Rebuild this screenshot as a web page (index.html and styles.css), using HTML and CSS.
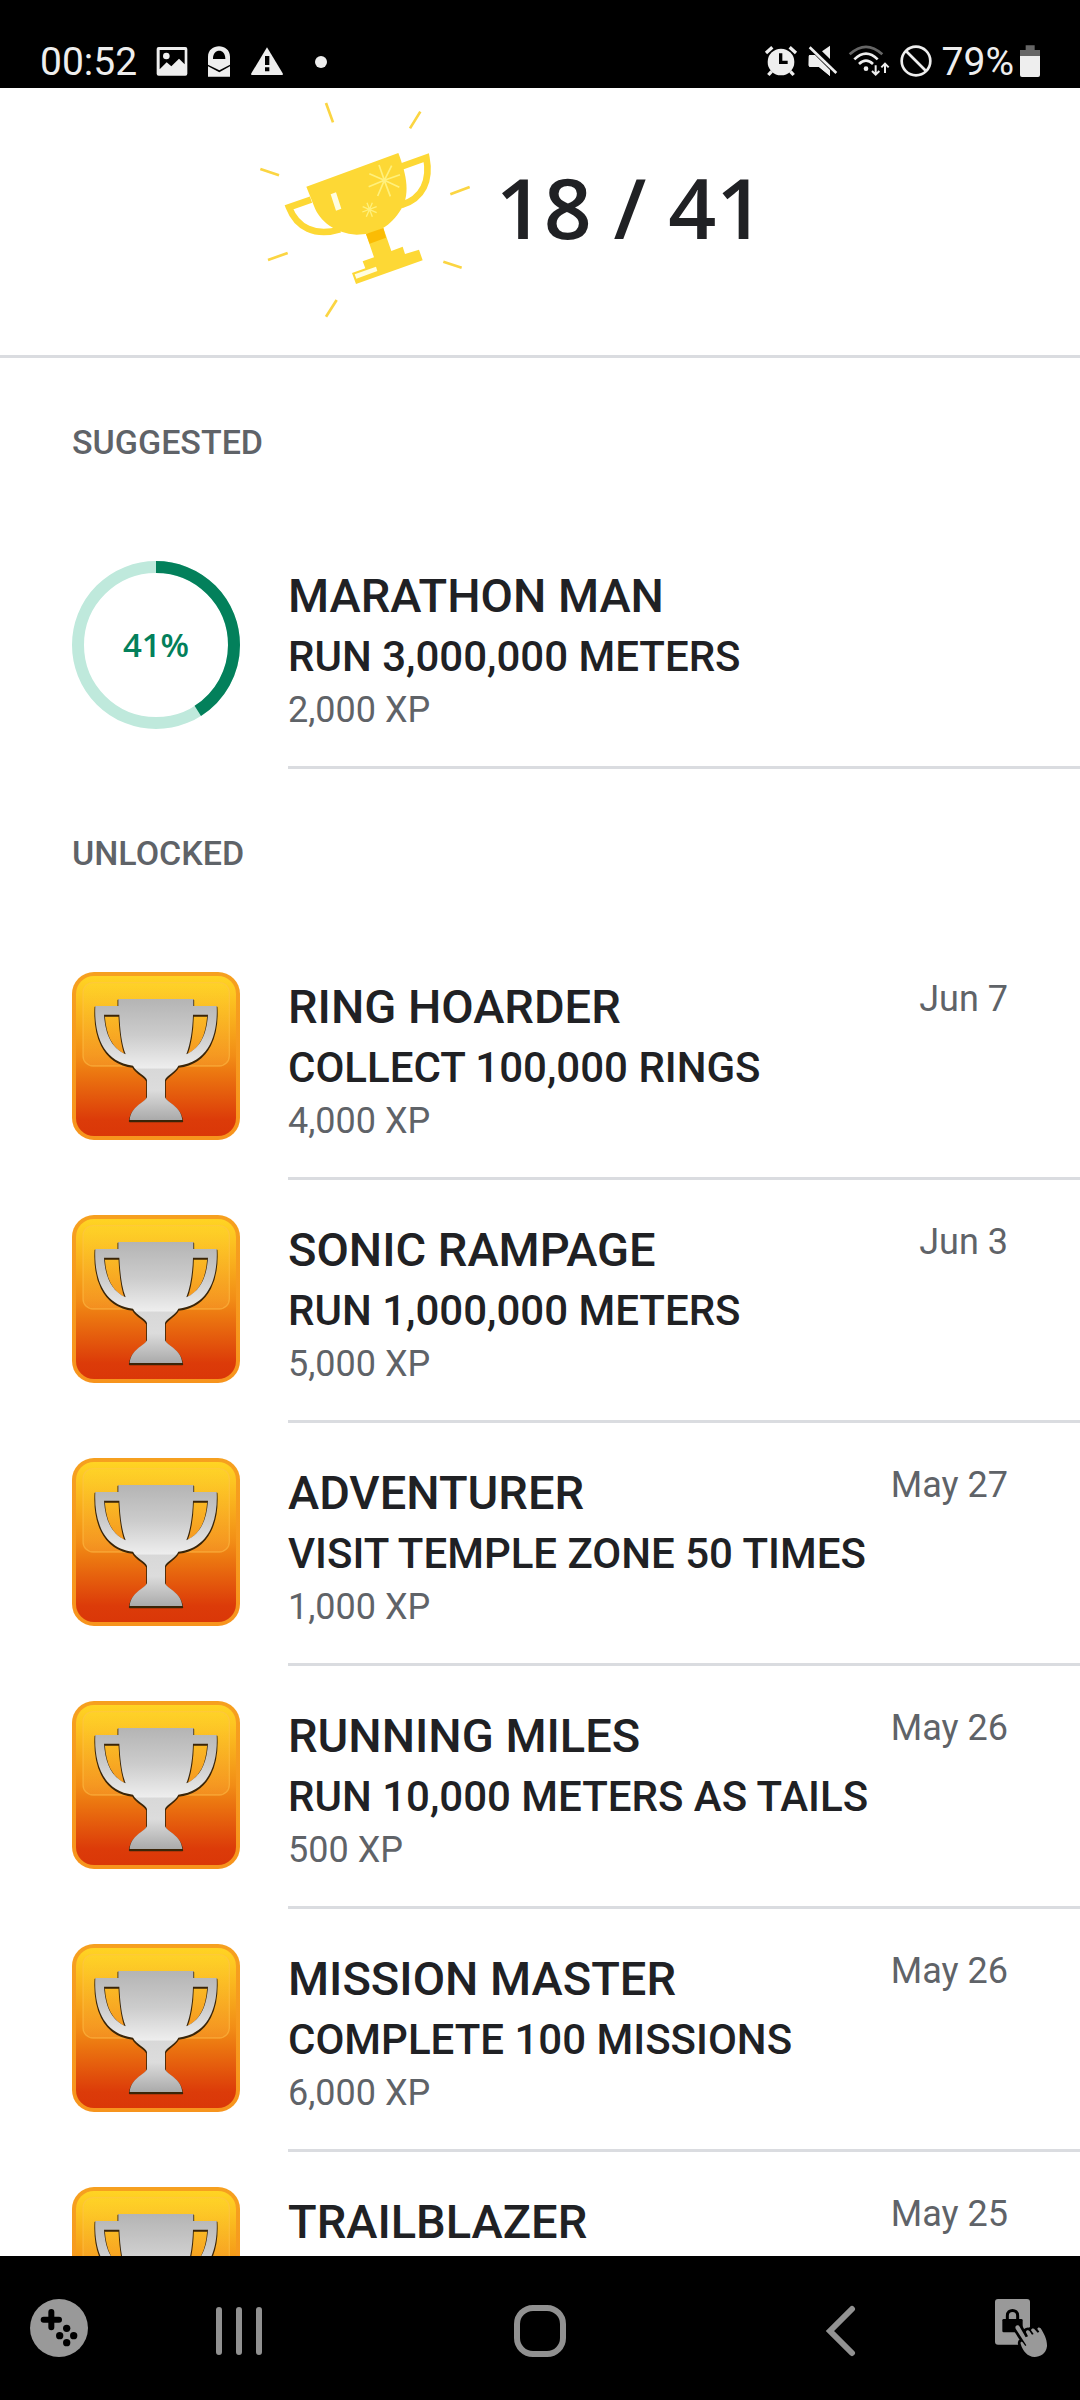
FILE: index.html
```html
<!DOCTYPE html>
<html lang="en">
<head>
<meta charset="utf-8">
<meta name="viewport" content="width=device-width, initial-scale=1">
<title>Achievements</title>
<link rel="stylesheet" href="styles.css">
</head>
<body>
<svg width="0" height="0" class="defs" aria-hidden="true">
  <defs>
    <linearGradient id="tile" x1="0" y1="0" x2="0" y2="1">
      <stop offset="0" stop-color="#ffd423"/><stop offset=".12" stop-color="#fdc521"/><stop offset=".5" stop-color="#f28d16"/><stop offset=".62" stop-color="#eb7410"/><stop offset=".9" stop-color="#dc3b09"/><stop offset="1" stop-color="#da3708"/>
    </linearGradient>
    <linearGradient id="gloss" x1="0" y1="0" x2="0" y2="1">
      <stop offset="0" stop-color="#ffe03a" stop-opacity=".2"/><stop offset="1" stop-color="#ffb545" stop-opacity=".25"/>
    </linearGradient>
    <linearGradient id="edge" x1="0" y1="0" x2="0" y2="1">
      <stop offset="0" stop-color="#f6a01f"/><stop offset="1" stop-color="#f7941d"/>
    </linearGradient>
    <linearGradient id="silver" x1="0" y1="116" x2="0" y2="482" gradientUnits="userSpaceOnUse">
      <stop offset="0" stop-color="#b4b4b4"/><stop offset=".3" stop-color="#cccccc"/><stop offset=".57" stop-color="#eeeeee"/><stop offset=".575" stop-color="#d8d8d8"/><stop offset=".75" stop-color="#dcdcdc"/><stop offset="1" stop-color="#a9a9a9"/>
    </linearGradient>
    <symbol id="badge" viewBox="36 36 504 504">
      <rect x="36" y="36" width="504" height="504" rx="66" fill="url(#edge)"/>
      <rect x="48" y="48" width="480" height="480" rx="54" fill="url(#tile)"/>
      <rect x="69" y="68" width="439" height="250" rx="30" fill="url(#gloss)" stroke="#ffc44d" stroke-opacity=".5" stroke-width="4"/>
      <g stroke-linejoin="round">
        <path fill-rule="evenodd" transform="translate(0 4)" fill="#3a2508" stroke="#3a2508" stroke-width="5" d="M175 117H400V138H470C474 215 452 306 355 317C345 338 320 345 315 360V412C325 432 362 437 367 480H209C214 437 250 432 261 412V360C256 345 230 338 219 317C124 306 102 215 106 138H175ZM132 164C136 220 152 262 197 283C184 250 180 205 178 164ZM444 164C440 220 424 262 379 283C392 250 398 205 399 164Z"/>
        <path fill-rule="evenodd" fill="url(#silver)" d="M175 117H400V138H470C474 215 452 306 355 317C345 338 320 345 315 360V412C325 432 362 437 367 480H209C214 437 250 432 261 412V360C256 345 230 338 219 317C124 306 102 215 106 138H175ZM132 164C136 220 152 262 197 283C184 250 180 205 178 164ZM444 164C440 220 424 262 379 283C392 250 398 205 399 164Z"/>
      </g>
    </symbol>
  </defs>
</svg>

<div class="screen">
  <header class="status">
    <div class="status-group status-left">
      <span class="status-text">00:52</span>
      <svg width="32" height="36" viewBox="466 72 96 108" aria-hidden="true"><path fill-rule="evenodd" fill="#eee" d="M474 81H554Q560 81 560 87V161Q560 167 554 167H474Q468 167 468 161V87Q468 81 474 81ZM477 90V148L498 127L512 139L535 116L552 133V90Z"/><circle cx="497" cy="108" r="10" fill="#eee"/></svg>
      <svg width="24" height="36" viewBox="624 72 72 108" aria-hidden="true"><path fill-rule="evenodd" fill="#eee" d="M627 134V110C627 68 693 68 693 110V134L661 151ZM642 117H679C680 84 641 84 642 117Z"/><path fill="#eee" d="M627 139L661 157L693 139V170H627Z"/></svg>
      <svg width="34" height="36" viewBox="756 72 102 108" aria-hidden="true"><path fill="#eee" d="M807 82L854 160Q856 165 851 165H763Q758 165 760 160Z"/><path fill="#000" d="M801 108H814V135H801ZM801 142H814V154H801Z"/></svg>
      <svg width="36" height="12" viewBox="0 0 36 12" aria-hidden="true"><circle cx="18" cy="6" r="6" fill="#eee"/></svg>
    </div>
    <div class="status-group status-right">
      <svg width="34" height="36" viewBox="63 72 102 108" aria-hidden="true"><circle cx="114" cy="126" r="40" fill="#eee"/><path d="M69 99L88 82M140 82L159 99M86 154L76 165M142 154L152 165" stroke="#eee" stroke-width="10"/><path d="M113 100V127H134" fill="none" stroke="#000" stroke-width="10"/></svg>
      <svg width="30" height="36" viewBox="207 72 90 108" aria-hidden="true"><path fill="#eee" d="M210 109Q209 105 214 105H227L273 150V168L240 141H214Q209 141 209 136ZM249 94L273 77V117Z"/><path d="M214 82L292 159" stroke="#000" stroke-width="20"/><path fill="#eee" d="M209 109Q209 105 214 105H228L273 150V168L240 141H214Q209 141 209 136Z"/><path d="M212 82L292 159" stroke="#eee" stroke-width="8"/></svg>
      <svg width="42" height="36" viewBox="330 72 126 108" fill="none" aria-hidden="true"><path d="M335 103Q384 58 433 103" stroke="#666" stroke-width="8"/><path d="M349 118Q384 84 419 118M363 132Q384 112 405 132" stroke="#eee" stroke-width="8"/><circle cx="384" cy="146" r="7" fill="#eee"/><path d="M413 136V164M402 153L413 164L424 153M441 159V131M430 142L441 131L452 142" stroke="#eee" stroke-width="6"/></svg>
      <svg width="32" height="36" viewBox="473 72 96 108" fill="none" stroke="#eee" stroke-width="8" aria-hidden="true"><circle cx="521" cy="123" r="43"/><path d="M491 93L551 153"/></svg>
      <div class="battery">
        <span class="status-text">79%</span>
        <svg width="20" height="36" viewBox="840 72 60 108" aria-hidden="true"><path fill="#666" d="M857 76H884V90H900V108H840V90H857Z"/><path fill="#eee" d="M840 108H900V165Q900 171 894 171H846Q840 171 840 165Z"/></svg>
      </div>
    </div>
  </header>

  <main class="content">
    <section class="summary">
      <svg width="250" height="240" viewBox="0 0 750 720" aria-hidden="true">
        <path d="M258 39L279 97M541 65L510 115M61 237L117 256M689 291L631 313M84 510L143 489M610 515L665 533M290 630L258 680" stroke="#fbd542" stroke-width="8"/>
        <path d="M213 329L147 352C170 412 225 441 300 418M486 229L559 203C572 270 550 325 484 345" fill="none" stroke="#fdd835" stroke-width="20"/>
        <path fill="#fdd835" d="M199 290L475 189C500 255 514 318 478 366C445 416 400 434 350 434C285 430 238 393 222 348Z"/>
        <path fill="#fdd835" d="M378 432L430 414L454 483L488 470L495 492L537 479L548 511L348 582L336 549L376 535L368 514L402 502Z"/>
        <path fill="#fbbc04" d="M378 432L430 414L438 443L389 461Z"/>
        <path fill="#fffde0" d="M272 313L288 307L304 356L288 362ZM344 553L408 530L412 543L349 566Z"/>
        <path d="M433 271L417 225M433 271L455 227M433 271L480 254M433 271L478 292M433 271L451 319M433 271L413 318M433 271L386 290M433 271L388 251" stroke="#fff07c" stroke-width="5"/>
        <path d="M381 338L397 380M397 338L379 380M367 366L410 350M368 350L410 368" stroke="#fff07c" stroke-width="4"/>
      </svg>
      <h1 class="count">18 / 41</h1>
    </section>

    <h2 class="section-title">SUGGESTED</h2>
    <ul class="list">
      <li class="row">
        <div class="progress">
          <svg width="168" height="168" viewBox="0 0 168 168" fill="none" stroke-width="12" aria-hidden="true"><circle cx="84" cy="84" r="78" stroke="#bfe9dc"/><circle cx="84" cy="84" r="78" stroke="#03805b" pathLength="100" stroke-dasharray="41 59" transform="rotate(-90 84 84)"/></svg>
          <span class="progress-label">41%</span>
        </div>
        <div class="body"><div class="text"><h3 class="name">MARATHON MAN</h3><p class="goal">RUN 3,000,000 METERS</p><p class="xp">2,000 XP</p></div></div>
      </li>
    </ul>

    <h2 class="section-title">UNLOCKED</h2>
    <ul class="list">
      <li class="row"><svg class="badge" aria-hidden="true"><use href="#badge"/></svg><div class="body"><div class="text"><h3 class="name">RING HOARDER</h3><p class="goal">COLLECT 100,000 RINGS</p><p class="xp">4,000 XP</p></div><time class="date">Jun 7</time></div></li>
      <li class="row"><svg class="badge" aria-hidden="true"><use href="#badge"/></svg><div class="body"><div class="text"><h3 class="name">SONIC RAMPAGE</h3><p class="goal">RUN 1,000,000 METERS</p><p class="xp">5,000 XP</p></div><time class="date">Jun 3</time></div></li>
      <li class="row"><svg class="badge" aria-hidden="true"><use href="#badge"/></svg><div class="body"><div class="text"><h3 class="name">ADVENTURER</h3><p class="goal">VISIT TEMPLE ZONE 50 TIMES</p><p class="xp">1,000 XP</p></div><time class="date">May 27</time></div></li>
      <li class="row"><svg class="badge" aria-hidden="true"><use href="#badge"/></svg><div class="body"><div class="text"><h3 class="name">RUNNING MILES</h3><p class="goal">RUN 10,000 METERS AS TAILS</p><p class="xp">500 XP</p></div><time class="date">May 26</time></div></li>
      <li class="row"><svg class="badge" aria-hidden="true"><use href="#badge"/></svg><div class="body"><div class="text"><h3 class="name">MISSION MASTER</h3><p class="goal">COMPLETE 100 MISSIONS</p><p class="xp">6,000 XP</p></div><time class="date">May 26</time></div></li>
      <li class="row"><svg class="badge" aria-hidden="true"><use href="#badge"/></svg><div class="body"><div class="text"><h3 class="name">TRAILBLAZER</h3></div><time class="date">May 25</time></div></li>
    </ul>
  </main>

  <nav class="navbar" aria-label="System navigation">
    <button class="nav-button" aria-label="Game tools"><svg width="58" height="58" viewBox="90 237 174 174" aria-hidden="true"><circle cx="177" cy="324" r="87" fill="#999"/><path d="M154 276V322M131 299H177" stroke="#000" stroke-width="18" stroke-linecap="round"/><circle cx="200" cy="325" r="11"/><circle cx="179" cy="347" r="11"/><circle cx="221" cy="347" r="11"/><circle cx="200" cy="368" r="11"/></svg></button>
    <button class="nav-button nav-main" aria-label="Recent apps"><svg width="52" height="58" viewBox="0 0 52 58" stroke="#919191" stroke-width="6" stroke-linecap="round" aria-hidden="true"><path d="M6 11V53M26 11V53M46 11V53"/></svg></button>
    <button class="nav-button nav-main" aria-label="Home"><svg width="52" height="58" viewBox="0 0 52 58" fill="none" stroke="#919191" stroke-width="6" aria-hidden="true"><rect x="3" y="9" width="46" height="46" rx="16"/></svg></button>
    <button class="nav-button nav-main" aria-label="Back"><svg width="52" height="58" viewBox="0 0 52 58" fill="none" stroke="#919191" stroke-width="6" stroke-linecap="round" aria-hidden="true"><path d="M37 10L15 32L37 54"/></svg></button>
    <button class="nav-button" aria-label="Touch lock"><svg width="58" height="58" viewBox="96 87 174 174" aria-hidden="true">
      <rect x="105" y="87" width="105" height="137" rx="9" fill="#999"/>
      <rect x="127" y="147" width="61" height="40" rx="4"/>
      <path d="M142 150V137C142 116 173 116 173 137V150" fill="none" stroke="#000" stroke-width="9"/>
      <path id="hand" fill="#999" stroke="#000" stroke-width="16" stroke-linejoin="round" paint-order="stroke" d="M167 176C163 167 174 162 179 170L197 202L204 199L198 187C197 180 206 179 209 184L216 194L221 192L213 181C214 175 221 174 225 179L233 188L238 185L232 177C232 171 239 171 242 175C251 190 262 208 261 229C258 252 240 261 224 261C202 260 189 244 182 222C180 214 186 213 189 218L196 228L199 226Z"/>
    </svg></button>
  </nav>
</div>
</body>
</html>
```
FILE: styles.css
```css
* { box-sizing: border-box; }
body { margin: 0; background: #000; font-family: Roboto, "Noto Sans", sans-serif; }
h1, h2, h3, p, ul { margin: 0; padding: 0; font-weight: 500; }
svg { display: block; flex: none; }
.defs { position: absolute; }

.screen { display: flex; flex-direction: column; height: 100vh; }

.status { flex: none; display: flex; justify-content: space-between; height: 88px; padding: 36px 40px 0; background: #000; }
.status-group { display: flex; align-items: center; height: 52px; }
.status-left { gap: 19px; }
.status-right { gap: 10px; }
.battery { display: flex; align-items: center; gap: 6px; }
.status-text { color: #eee; font-size: 39px; line-height: 52px; }

.content { flex: 1; min-height: 0; overflow: hidden; background: #fff; }
.summary { display: flex; justify-content: center; align-items: flex-start; gap: 6px; height: 270px; padding: 2px 76px 0 0; border-bottom: 3px solid #dadce0; }
.count { padding-top: 57px; color: #202124; font: 600 84px/120px "Open Sans", sans-serif; }

.section-title { padding: 60px 72px; color: #5f6368; font-size: 34px; line-height: 48px; }
.list { list-style: none; }
.row { display: flex; gap: 48px; padding-left: 72px; }
.badge { width: 168px; height: 168px; margin-top: 35px; }
.progress { display: grid; place-items: center; align-self: flex-start; margin-top: 35px; }
.progress > * { grid-area: 1 / 1; }
.progress-label { color: #03805b; font: 600 33px/48px "Open Sans", sans-serif; }
.body { flex: 1; display: flex; justify-content: space-between; min-height: 243px; padding: 40px 72px 32px 0; border-bottom: 3px solid #dadce0; }
.name { color: #202124; font-size: 47px; line-height: 60px; }
.goal { color: #202124; font-size: 42px; line-height: 62px; }
.xp, .date { color: #5f6368; font-size: 36px; font-weight: 400; line-height: 44px; }

.navbar { flex: none; display: flex; align-items: center; height: 144px; padding: 0 30px; background: #000; }
.nav-button { display: grid; place-items: center; padding: 0; border: 0; background: none; }
.nav-main { flex: 1; }
```
